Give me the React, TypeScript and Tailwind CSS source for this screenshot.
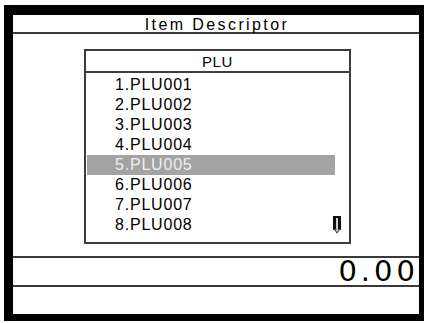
const items = ["PLU001", "PLU002", "PLU003", "PLU004", "PLU005", "PLU006", "PLU007", "PLU008"];
const selected = 4;

function ScrollDown() {
  return (
    <svg width="8" height="19" viewBox="0 0 8 19" className="absolute left-[247px] top-[165px]">
      <rect x="0" y="0" width="8" height="14" fill="#111" />
      <rect x="3.2" y="2" width="1.6" height="11" fill="#fff" />
      <path d="M0.5 13 L4 18 L7.5 13" fill="#555" />
      <path d="M2.5 13.5 L4 16 L5.5 13.5" fill="#ddd" />
    </svg>
  );
}

export default function App() {
  return (
    <div className="w-[429px] h-[323px] bg-white pl-[4px] pt-[5px] font-['Liberation_Sans',Arial,sans-serif]">
      <div className="w-[420px] h-[316px] bg-black pl-[9px] pt-[10px] pr-[5px] pb-[7px]">
        <div className="w-[406px] h-[299px] bg-white flex flex-col">
          {/* title */}
          <div className="h-[19px] border-b-2 border-[#3a3a3a] flex items-center justify-center pl-[2px] pt-[2px] text-[16px] leading-none tracking-[2.4px] text-black">
            Item Descriptor
          </div>

          {/* list area */}
          <div className="h-[222px] pt-[15px] pl-[71px]">
            <div className="relative w-[267px] h-[195px] border-2 border-[#3c3c3c]">
              <div className="h-[22px] border-b-2 border-[#3c3c3c] flex items-center justify-center text-[15px] leading-none tracking-[0.6px] pt-[1px]">
                PLU
              </div>
              <ul className="ml-[1px] w-[248px] pt-[2px]">
                {items.map((name, i) => (
                  <li
                    key={name}
                    className={
                      "h-[20px] pl-[28px] flex items-center text-[16px] leading-none tracking-[0.8px] " +
                      (i === selected ? "bg-[#a3a3a3] text-[#eeeeee]" : "text-black")
                    }
                  >
                    {i + 1}.{name}
                  </li>
                ))}
              </ul>
              <ScrollDown />
            </div>
          </div>

          {/* amount */}
          <div className="h-[31px] border-t-2 border-b-2 border-[#3a3a3a] flex items-center justify-end pr-0 text-[29px] leading-none tracking-[4px] text-black font-['DejaVu_Sans',sans-serif]">
            0.00
          </div>

          <div className="flex-1" />
        </div>
      </div>
    </div>
  );
}
